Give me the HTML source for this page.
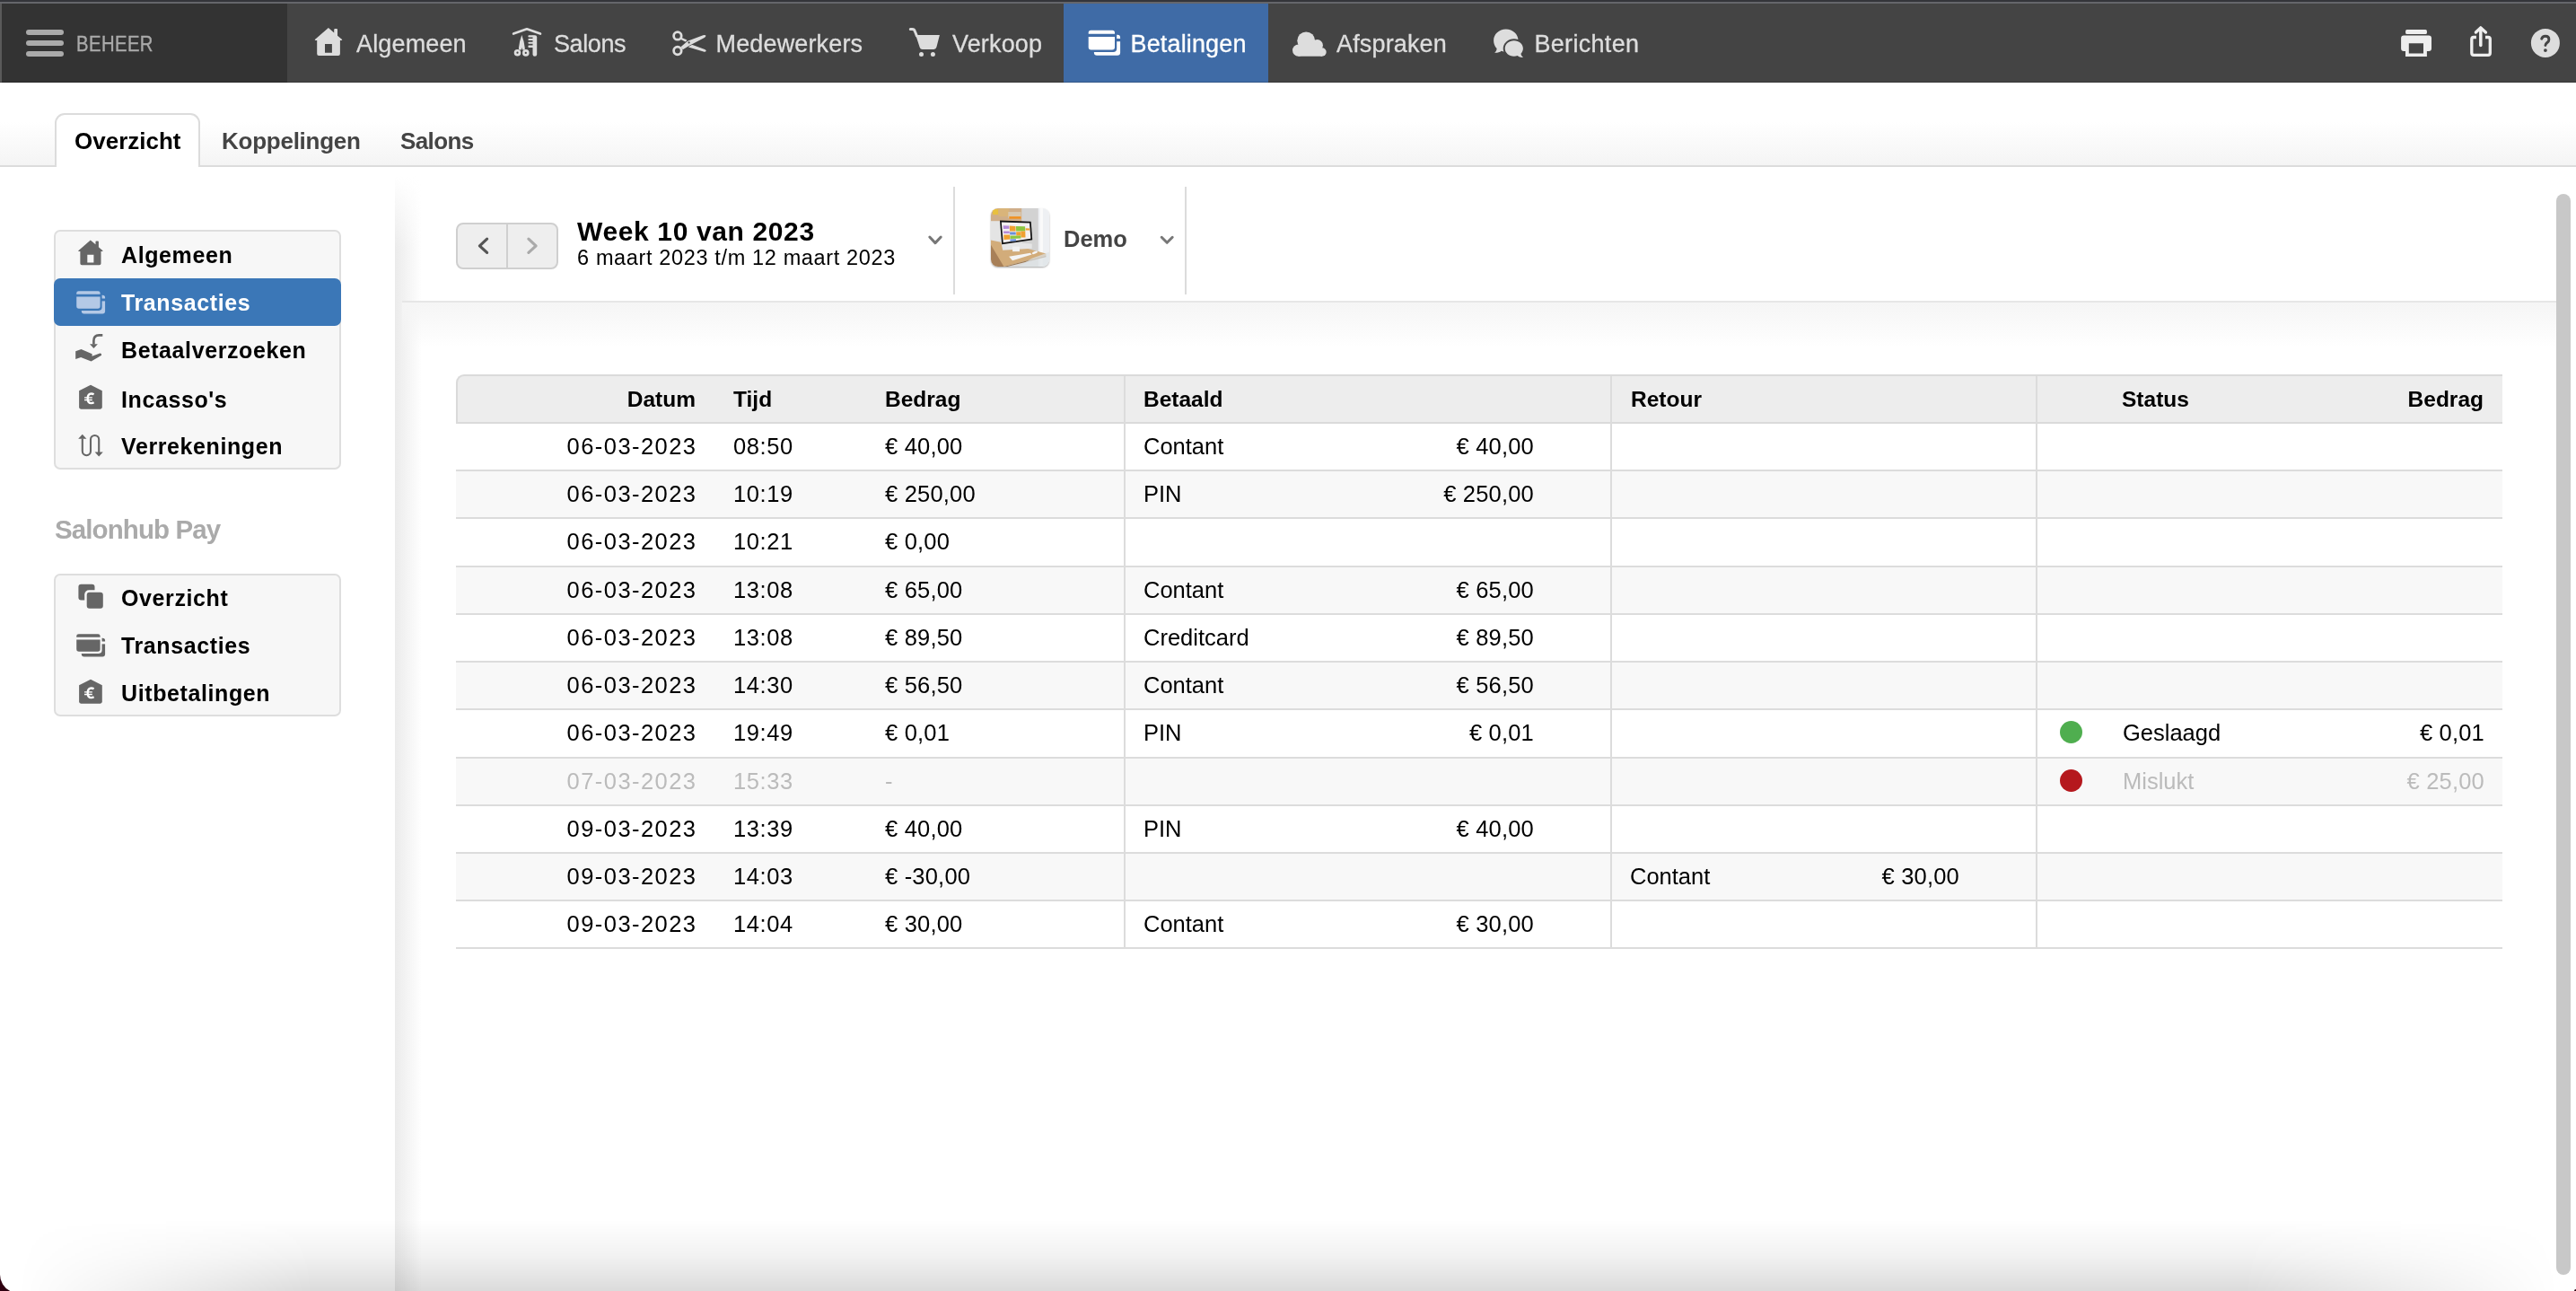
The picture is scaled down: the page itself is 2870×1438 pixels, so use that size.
<!DOCTYPE html>
<html><head><meta charset="utf-8">
<style>
*{margin:0;padding:0;box-sizing:border-box}
html,body{width:2870px;height:1438px;overflow:hidden;background:#fff;font-family:"Liberation Sans",sans-serif}
body{position:relative}
.a{position:absolute}
.t{position:absolute;white-space:nowrap;line-height:1}
/* top nav */
#tl1{left:0;top:0;width:2870px;height:2px;background:#34353a}
#tl2{left:0;top:2px;width:2870px;height:2px;background:#65666b}
#nav{left:0;top:4px;width:2870px;height:88px;background:#444}
#navl{left:0;top:4px;width:320px;height:88px;background:#333}
#navedge{left:0;top:4px;width:2px;height:88px;background:#5a5a5a}
#navbot{left:0;top:91px;width:2870px;height:1px;background:rgba(0,0,0,0.18)}
.burger{left:29px;width:42px;height:6px;border-radius:3px;background:#aaa}
.nt{color:#ddd;font-size:27px;top:35.7px;letter-spacing:0.15px;-webkit-text-stroke:0.3px currentColor}
#active{left:1185px;top:4px;width:228px;height:88px;background:#3f6ba6}
/* subtabs */
#sub{left:0;top:92px;width:2870px;height:93px;background:linear-gradient(#fff 0%,#fff 47%,#f4f4f4 100%)}
#subline{left:0;top:184px;width:2870px;height:2px;background:#dcdcdc}
#tab{left:61px;top:126px;width:162px;height:60px;background:#fff;border:2px solid #dcdcdc;border-bottom:none;border-radius:11px 11px 0 0}
.st{font-size:26px;font-weight:bold;top:144px}
/* sidebar */
.sbox{left:60px;width:320px;background:#f7f7f7;border:2px solid #dedede;border-radius:7px}
.si{font-size:25px;font-weight:bold;color:#000;left:135px;letter-spacing:0.6px}
#sact{left:60px;top:310px;width:320px;height:53px;background:#3b77b7;border-radius:7px}
/* main panel */
#panel{left:440px;top:186px;width:2429px;height:1252px;background:#fff}
#pshadow{left:440px;top:186px;width:30px;height:1252px;background:linear-gradient(90deg,#ebebeb,rgba(255,255,255,0));-webkit-mask-image:linear-gradient(rgba(0,0,0,0) 10px,#000 90px)}
#hdrline{left:448px;top:335px;width:2400px;height:2px;background:#e6e6e6}
#hdrgrad{left:448px;top:337px;width:2400px;height:50px;background:linear-gradient(#f5f5f5,rgba(255,255,255,0))}
#scroll{left:2848px;top:216px;width:16px;height:1204px;border-radius:8px;background:#c8c8c8}
/* table */
.row{position:absolute;left:508px;width:2280px;height:53.2px;border-bottom:2px solid #dcdcdc}
.td{position:absolute;white-space:nowrap;line-height:1;font-size:25.5px;top:12.6px;color:#000}
.dt{letter-spacing:1.45px}.tm{letter-spacing:0.6px}.am{letter-spacing:0.2px}
.r{text-align:right}

.dot{top:11.8px;width:25px;height:25px;border-radius:50%}
.th{position:absolute;white-space:nowrap;line-height:1;font-size:24.5px;font-weight:bold;top:432.7px;color:#000}
.vsep{position:absolute;top:419px;width:2px;height:638px;background:#dcdcdc}
#thead{left:508px;top:417px;width:2280px;height:55px;background:#ededed;border-top:2px solid #dadada;border-left:2px solid #dadada;border-bottom:2px solid #dadada;border-radius:9px 0 0 0}
#navbtn{left:508px;top:248px;width:114px;height:52px;background:#eee;border:2px solid #cfcfcf;border-radius:8px}
#navdiv{left:564px;top:250px;width:2px;height:48px;background:#cfcfcf}
.hdiv{top:208px;width:2px;height:120px;background:#dcdcdc}
#thumb{left:1104px;top:232px;width:65px;height:65px;border-radius:8px;overflow:hidden;box-shadow:0 1px 2px rgba(0,0,0,.35)}
body{will-change:transform}</style></head>
<body>
<div class="a" id="tl1"></div><div class="a" id="tl2"></div>
<div class="a" id="nav"></div><div class="a" id="navl"></div><div class="a" id="navedge"></div>
<div class="a" id="active"></div>
<div class="a" id="navbot"></div>
<div class="a burger" style="top:33px"></div>
<div class="a burger" style="top:45px"></div>
<div class="a burger" style="top:57px"></div>
<div class="t" style="left:85px;top:37.5px;font-size:23.5px;color:#aaa;letter-spacing:0.5px;-webkit-text-stroke:0.35px #aaa;transform:scaleX(0.862);transform-origin:0 0">BEHEER</div>

<div class="t nt" style="left:397px">Algemeen</div>
<div class="t nt" style="left:617px;letter-spacing:-0.4px">Salons</div>
<div class="t nt" style="left:797.5px">Medewerkers</div>
<div class="t nt" style="left:1061px">Verkoop</div>
<div class="t nt" style="left:1259.5px;color:#fff">Betalingen</div>
<div class="t nt" style="left:1489px">Afspraken</div>
<div class="t nt" style="left:1709.5px;letter-spacing:0.3px">Berichten</div>


<!-- nav icons -->
<svg class="a" style="left:345px;top:26px" width="40" height="40" viewBox="0 0 40 40"><path fill="#ddd" fill-rule="evenodd" d="M5.9 18.1 L20.9 5 L27.2 10.4 L27.2 7 Q27.2 6 28.2 6 L30 6 Q31 6 31 7 L31 13.7 L36.1 18.1 Q36.6 18.9 35.6 18.9 L33.9 18.9 L33.9 33.9 Q33.9 35.9 31.9 35.9 L10.2 35.9 Q8.2 35.9 8.2 33.9 L8.2 18.9 L6.4 18.9 Q5.4 18.9 5.9 18.1 Z M17 23.1 L24.9 23.1 L24.9 32.8 L17 32.8 Z"/></svg>

<svg class="a" style="left:566px;top:26px" width="42" height="42" viewBox="0 0 42 42"><g fill="#ddd" stroke="none">
<path d="M6.1 11.6 L21 6.3 L36 11.6" fill="none" stroke="#ddd" stroke-width="2.7" stroke-linecap="round" stroke-linejoin="round"/>
<path d="M15.3 13 Q17.9 19.5 18.8 27.6 L18.7 29.6 L16 29.6 L15.4 26.8 L14.8 29.6 L12.1 29.6 L11.9 27.6 Q12.8 19.5 15.3 13 Z"/>
<circle cx="10.5" cy="32.7" r="2.45" fill="none" stroke="#ddd" stroke-width="2.7"/>
<circle cx="19.8" cy="32.9" r="2.45" fill="none" stroke="#ddd" stroke-width="2.7"/>
<path d="M27.5 13.3 L30 13.3 Q32.2 13.3 32.2 15.5 L32.2 34.5 Q32.2 36.8 29.85 36.8 Q27.5 36.8 27.5 34.5 Z"/>
<rect x="22.4" y="13.3" width="6" height="2.2" rx="1"/>
<rect x="22.4" y="17" width="6" height="2.1" rx="1"/>
<rect x="22.4" y="20.7" width="6" height="2.1" rx="1"/>
<path d="M23.4 24.4 L28 24.4 L28 27 L23.4 27 Q22.4 27 22.4 25.7 Q22.4 24.4 23.4 24.4 Z"/>
</g></svg>

<svg class="a" style="left:745px;top:28px" width="46" height="40" viewBox="0 0 46 40">
<circle cx="9.9" cy="11.9" r="4.28" fill="none" stroke="#ddd" stroke-width="2.75"/>
<path fill="#ddd" d="M13.2 13.2 L20.3 16.6 L19.2 18.8 L12.6 15.6 Z"/>
<path fill="#ddd" d="M22.5 20.6 L40.2 26.9 Q42.3 27.9 41.6 29.1 Q40.8 30.2 38.8 29.6 L22 24.4 Z"/>
<path fill="#ddd" stroke="#444" stroke-width="1.3" paint-order="stroke" d="M13.5 24.3 L21 17.8 L38.3 11.2 Q40.6 10.4 41.3 11.6 Q41.8 12.8 39.8 13.9 L23.6 22.4 L15.8 27.3 Z"/>
<circle cx="9.9" cy="28.5" r="4.28" fill="none" stroke="#ddd" stroke-width="2.75"/>
<circle cx="22.6" cy="19.4" r="1.1" fill="#444"/>
</svg>

<svg class="a" style="left:1008px;top:26px" width="44" height="42" viewBox="0 0 44 42">
<path d="M6.3 6.5 L8.4 6.5 Q10.6 6.5 11.3 8.8 L13.4 14" fill="none" stroke="#ddd" stroke-width="3" stroke-linecap="round" stroke-linejoin="round"/>
<path d="M12.2 13 L38.9 13 L35.4 26.6 Q34.8 29 32.4 29 L19.6 29 Q17.4 29 16.7 26.8 Z" fill="#ddd"/>
<circle cx="18.5" cy="34.5" r="2.5" fill="#ddd"/><circle cx="31.4" cy="34.5" r="2.5" fill="#ddd"/>
</svg>

<svg class="a" style="left:1208px;top:28px" width="44" height="38" viewBox="0 0 44 38">
<rect x="10.9" y="10.7" width="29.2" height="23.1" rx="3.2" fill="#fff"/>
<rect x="2.7" y="3.7" width="33.5" height="26.2" rx="4" fill="#3f6ba6"/>
<rect x="34" y="15" width="8" height="3.2" fill="#3f6ba6"/>
<path d="M4.7 9.7 L4.7 8.4 Q4.7 5.7 7.4 5.7 L31.3 5.7 Q34 5.7 34 8.4 L34 9.7 Z" fill="#fff"/>
<path d="M4.7 12.9 L34 12.9 L34 24.4 Q34 27.4 31 27.4 L7.7 27.4 Q4.7 27.4 4.7 24.4 Z" fill="#fff"/>
</svg>

<svg class="a" style="left:1436px;top:28px" width="46" height="40" viewBox="0 0 46 40"><g fill="#ddd">
<circle cx="19.2" cy="17.3" r="9.9"/><circle cx="10.6" cy="28.1" r="6.6"/><circle cx="31.6" cy="22.4" r="6.3"/><circle cx="37" cy="30" r="4.7"/>
<rect x="10.6" y="22" width="26.4" height="12.7"/></g></svg>

<svg class="a" style="left:1658px;top:28px" width="44" height="40" viewBox="0 0 44 40">
<path fill="#ddd" d="M19.8 4.6 C27.5 4.6 33.5 10.3 33.5 17.2 C33.5 24 27.5 29.6 19.8 29.6 C17.9 29.6 16.3 29.3 14.7 28.7 C12.8 30.3 10 30.9 7.1 30.7 C8.8 29.4 9.6 27.7 9.6 26 C7.4 23.7 6.1 20.6 6.1 17.2 C6.1 10.3 12.1 4.6 19.8 4.6 Z"/>
<ellipse cx="28.8" cy="26" rx="12.1" ry="10.7" fill="#444"/>
<path fill="#ddd" d="M28.8 17.3 C34.4 17.3 38.9 21.2 38.9 26 C38.9 28.2 38 30.2 36.5 31.8 C36.6 33.5 37.6 35 39 36 C36.5 36.3 34.3 35.5 32.6 34.1 C31.4 34.5 30.1 34.7 28.8 34.7 C23.2 34.7 18.7 30.8 18.7 26 C18.7 21.2 23.2 17.3 28.8 17.3 Z"/>
</svg>

<svg class="a" style="left:2670px;top:24px" width="44" height="44" viewBox="0 0 44 44">
<rect x="10.1" y="9" width="23.8" height="5" rx="1.6" fill="#eee"/>
<path fill="#eee" fill-rule="evenodd" d="M8.2 15.5 L35.9 15.5 Q39 15.5 39 18.6 L39 29.9 Q39 32.9 36 32.9 L33.9 32.9 L33.9 38.9 L10 38.9 L10 32.9 L8.1 32.9 Q5.1 32.9 5.1 29.9 L5.1 18.6 Q5.1 15.5 8.2 15.5 Z M13.8 24.2 L30 24.2 L30 35.6 L13.8 35.6 Z"/>
</svg>

<svg class="a" style="left:2744px;top:24px" width="40" height="44" viewBox="0 0 40 44">
<path d="M14.9 17.5 L12 17.5 Q9.8 17.5 9.8 19.7 L9.8 35 Q9.8 37.3 12 37.3 L28.1 37.3 Q30.3 37.3 30.3 35 L30.3 19.7 Q30.3 17.5 28.1 17.5 L25 17.5" fill="none" stroke="#eee" stroke-width="3.3"/>
<path d="M19.8 7.5 L19.8 26.6" stroke="#eee" stroke-width="3.5" stroke-linecap="round"/>
<path d="M14.4 12 L19.8 6.9 L25.4 12" fill="none" stroke="#eee" stroke-width="3.4" stroke-linecap="round" stroke-linejoin="round"/>
</svg>

<svg class="a" style="left:2818px;top:30px" width="36" height="36" viewBox="0 0 36 36">
<circle cx="17.9" cy="17.9" r="16" fill="#ddd"/>
<path d="M13.7 13.2 Q14.6 10.3 17.9 10.3 Q21.9 10.3 21.9 13.9 Q21.9 15.9 19.8 17.5 Q17.9 19 17.9 20.6" fill="none" stroke="#444" stroke-width="2.9" stroke-linecap="round" stroke-linejoin="round"/>
<circle cx="17.9" cy="26.1" r="1.9" fill="#444"/>
</svg>

<div class="a" id="sub"></div>
<div class="a" id="subline"></div>
<div class="a" id="tab"></div>
<div class="t st" style="left:83px;color:#000">Overzicht</div>
<div class="t st" style="left:247px;color:#444;letter-spacing:-0.25px">Koppelingen</div>
<div class="t st" style="left:446px;color:#444;letter-spacing:-0.6px">Salons</div>

<!-- sidebar -->
<div class="a sbox" style="top:256px;height:267px"></div>
<div class="a" id="sact"></div>
<div class="t si" style="top:272px">Algemeen</div>
<div class="t si" style="top:325.4px;color:#fff">Transacties</div>
<div class="t si" style="top:378.3px">Betaalverzoeken</div>
<div class="t si" style="top:432.5px">Incasso's</div>
<div class="t si" style="top:485.4px">Verrekeningen</div>

<div class="t" style="left:61px;top:575px;font-size:29.5px;font-weight:bold;color:#aaa;letter-spacing:-0.9px">Salonhub Pay</div>
<div class="a sbox" style="top:639px;height:159px"></div>
<div class="t si" style="top:653.5px">Overzicht</div>
<div class="t si" style="top:707px">Transacties</div>
<div class="t si" style="top:760.3px">Uitbetalingen</div>

<!-- main -->
<div class="a" id="panel"></div>
<div class="a" id="pshadow"></div>
<div class="a" id="hdrgrad"></div>
<div class="a" id="hdrline"></div>
<div class="a" id="scroll"></div>


<!-- toolbar -->
<div class="a" id="navbtn"></div>
<div class="a" id="navdiv"></div>
<div class="t" style="left:643px;top:243px;font-size:30px;font-weight:bold;color:#000;letter-spacing:0.63px">Week 10 van 2023</div>
<div class="t" style="left:643px;top:276.1px;font-size:23.5px;color:#000;letter-spacing:0.64px">6 maart 2023 t/m 12 maart 2023</div>
<div class="a hdiv" style="left:1062px"></div>
<div class="a" id="thumb"><svg width="65" height="65" viewBox="0 0 64 64" preserveAspectRatio="none" style="filter:blur(0.35px)">
<rect width="64" height="64" fill="#dcdcdc"/>
<rect x="0" y="0" width="34" height="16" fill="#cfae8a"/>
<rect x="8" y="0" width="12" height="9" fill="#d9b47a"/>
<rect x="19" y="4" width="14" height="7" fill="#d8c8b0"/>
<rect x="20" y="9" width="13" height="2.5" fill="#f09020"/>
<rect x="2" y="1" width="6" height="6" fill="#e8c040"/>
<rect x="0" y="14" width="12" height="22" fill="#e4e4e4"/>
<rect x="34" y="0" width="18" height="50" fill="#d2d2d2"/>
<rect x="52" y="0" width="12" height="64" fill="#eef0f3"/>
<rect x="54" y="0" width="3" height="64" fill="#fafafa"/>
<polygon points="0,35 25,40 60.5,49.6 60.5,52 14.2,64 0,64" fill="#d2ac7a"/>
<polygon points="0,40 14.2,64 0,64" fill="#a88058"/>
<polygon points="60.5,52 14.2,64 18,64 60.5,53.5" fill="#9c7a55"/>
<polygon points="11,37 45,39 45,44 13,46" fill="#e6e6e6"/>
<rect x="23.7" y="42" width="7.8" height="5.4" fill="#f2f2f2"/>
<polygon points="9.8,13.4 44,14.5 45.5,34.6 12,39.6" fill="#111"/>
<polygon points="11.6,15.3 42.4,16.3 43.7,33.3 13.5,37.7" fill="#f4f0f0"/>
<polygon points="13.5,19 20,19.3 20.2,22.5 13.8,22.6" fill="#b58ad8"/>
<polygon points="20.5,19.3 27,19.6 27.2,25 20.7,25.2" fill="#f0a030"/>
<polygon points="27.5,19.6 37.5,20 37.7,25 27.7,25" fill="#8dc63f"/>
<polygon points="13.8,25 20.3,25 20.5,27.5 14,27.6" fill="#b58ad8"/>
<polygon points="20.7,26 27.2,26 27.4,29 20.9,29.1" fill="#6a8fd8"/>
<polygon points="27.7,25.8 32.5,25.8 32.7,30 27.9,30" fill="#f0a030"/>
<polygon points="32.7,25 37.7,25 37.9,32 32.9,32" fill="#f0a030"/>
<polygon points="14,29 20.7,29 21,34 14.3,34.5" fill="#f0a030"/>
<polygon points="21,30 32.7,30 32.9,33 21.2,33.5" fill="#8dc63f"/>
<polygon points="21,34 27.5,33.8 27.6,36 21.2,36.3" fill="#6a8fd8"/>
<polygon points="38,22 42.6,22.2 42.7,24 38.1,24" fill="#f0a030"/>
<polygon points="19.8,53 43.2,49.1 44.9,50.8 23.7,57.4" fill="#f4f4f4"/>
<ellipse cx="48.2" cy="48.6" rx="3.2" ry="1.3" fill="#f4f4f4" transform="rotate(-20 48.2 48.6)"/>
<polygon points="45,55 64,48 64,64 30,64" fill="#dde2e6" opacity="0.7"/>
</svg></div>
<svg class="a" style="left:520px;top:258px" width="110" height="32" viewBox="0 0 110 32">
<path d="M22.6 8.2 L14.4 15.8 L22.6 23.4" fill="none" stroke="#555" stroke-width="3.2" stroke-linecap="round" stroke-linejoin="round"/>
<path d="M68.9 8.2 L77.1 15.8 L68.9 23.4" fill="none" stroke="#aaa" stroke-width="3.2" stroke-linecap="round" stroke-linejoin="round"/>
</svg>
<svg class="a" style="left:1030px;top:258px" width="24" height="20" viewBox="0 0 24 20"><path d="M5.8 6 L12 12.6 L18.2 6" fill="none" stroke="#777" stroke-width="3" stroke-linecap="round" stroke-linejoin="round"/></svg>
<svg class="a" style="left:1288px;top:258px" width="24" height="20" viewBox="0 0 24 20"><path d="M6.2 6.3 L12.2 12.3 L18.2 6.3" fill="none" stroke="#777" stroke-width="3" stroke-linecap="round" stroke-linejoin="round"/></svg>

<!-- sidebar icons -->
<svg class="a" style="left:81.8px;top:263.1px" width="36" height="36" viewBox="0 0 36 36"><path transform="scale(0.9)" fill="#666" fill-rule="evenodd" d="M5.9 18.1 L20.9 5 L27.2 10.4 L27.2 7 Q27.2 6 28.2 6 L30 6 Q31 6 31 7 L31 13.7 L36.1 18.1 Q36.6 18.9 35.6 18.9 L33.9 18.9 L33.9 33.9 Q33.9 35.9 31.9 35.9 L10.2 35.9 Q8.2 35.9 8.2 33.9 L8.2 18.9 L6.4 18.9 Q5.4 18.9 5.9 18.1 Z M17 23.1 L24.9 23.1 L24.9 32.8 L17 32.8 Z"/></svg>
<svg class="a" style="left:80.5px;top:318.7px" width="40" height="35" viewBox="0 0 40 35"><g transform="scale(0.9)">
<rect x="10.9" y="10.7" width="29.2" height="23.1" rx="3.2" fill="#b4c9e6"/>
<rect x="2.7" y="3.7" width="33.5" height="26.2" rx="4" fill="#3b77b7"/>
<rect x="34" y="15" width="8" height="3.2" fill="#3b77b7"/>
<path d="M4.7 9.7 L4.7 8.4 Q4.7 5.7 7.4 5.7 L31.3 5.7 Q34 5.7 34 8.4 L34 9.7 Z" fill="#b4c9e6"/>
<path d="M4.7 12.9 L34 12.9 L34 24.4 Q34 27.4 31 27.4 L7.7 27.4 Q4.7 27.4 4.7 24.4 Z" fill="#b4c9e6"/></g></svg>
<svg class="a" style="left:80px;top:365px" width="40" height="40" viewBox="0 0 40 40">
<path d="M34.3 8.4 L30.3 8.4 Q24.4 8.4 24.4 14.6 L24.4 18.5" fill="none" stroke="#666" stroke-width="2.6" stroke-linejoin="round"/>
<path fill="#666" d="M20 18.3 L28.9 18.3 L24.4 23 Z"/>
<path fill="#666" d="M4.2 26.3 L10.5 24.1 L22.6 29.2 L22.6 31.8 L31.3 28.6 Q33.4 28.4 33.1 30.7 L21.6 37.6 L10.1 32.9 L4.2 35 Z"/>
</svg>
<svg class="a" style="left:80px;top:420px" width="40" height="40" viewBox="0 0 40 40">
<path fill="#666" d="M21 8.8 L33.8 15.3 L33.8 33.6 Q33.8 35.7 31.7 35.7 L10.2 35.7 Q8.1 35.7 8.1 33.6 L8.1 15.3 Z"/>
<path d="M24.6 19.3 Q23.2 18.5 21.7 18.5 Q17.7 18.5 17.7 23.9 Q17.7 29.1 21.7 29.1 Q23.2 29.1 24.6 28.3" fill="none" stroke="#fff" stroke-width="2.3"/>
<path d="M14 22.9 L22.8 22.9 M14 25.5 L22.8 25.5" stroke="#fff" stroke-width="1.4"/>
</svg>
<svg class="a" style="left:80px;top:478px" width="40" height="36" viewBox="0 0 40 36">
<path d="M11.8 10.5 L11.8 24.6 A4.6 4.6 0 0 0 21 24.6 L21 11.6 A4.6 4.6 0 0 1 30.2 11.6 L30.2 26" fill="none" stroke="#666" stroke-width="2.1"/>
<path fill="#666" d="M11.8 5.8 L16.4 10.8 L7.2 10.8 Z M30.2 30.6 L25.6 25.5 L34.8 25.5 Z"/>
</svg>
<svg class="a" style="left:80px;top:645px" width="40" height="40" viewBox="0 0 40 40">
<rect x="7.4" y="5.7" width="18.1" height="17.8" rx="3" fill="#666"/>
<rect x="14.2" y="12.3" width="23.1" height="23" rx="5" fill="#f7f7f7"/>
<rect x="16.7" y="14.8" width="18.1" height="18" rx="3" fill="#666"/>
</svg>
<svg class="a" style="left:80.7px;top:700.6px" width="40" height="35" viewBox="0 0 40 35"><g transform="scale(0.9)">
<rect x="10.9" y="10.7" width="29.2" height="23.1" rx="3.2" fill="#666"/>
<rect x="2.7" y="3.7" width="33.5" height="26.2" rx="4" fill="#f7f7f7"/>
<rect x="34" y="15" width="8" height="3.2" fill="#f7f7f7"/>
<path d="M4.7 9.7 L4.7 8.4 Q4.7 5.7 7.4 5.7 L31.3 5.7 Q34 5.7 34 8.4 L34 9.7 Z" fill="#666"/>
<path d="M4.7 12.9 L34 12.9 L34 24.4 Q34 27.4 31 27.4 L7.7 27.4 Q4.7 27.4 4.7 24.4 Z" fill="#666"/></g></svg>
<svg class="a" style="left:80px;top:748px" width="40" height="40" viewBox="0 0 40 40">
<path fill="#666" d="M21 8.8 L33.8 15.3 L33.8 33.6 Q33.8 35.7 31.7 35.7 L10.2 35.7 Q8.1 35.7 8.1 33.6 L8.1 15.3 Z"/>
<path d="M24.6 19.3 Q23.2 18.5 21.7 18.5 Q17.7 18.5 17.7 23.9 Q17.7 29.1 21.7 29.1 Q23.2 29.1 24.6 28.3" fill="none" stroke="#fff" stroke-width="2.3"/>
<path d="M14 22.9 L22.8 22.9 M14 25.5 L22.8 25.5" stroke="#fff" stroke-width="1.4"/>
</svg>

<div class="t" style="left:1185px;top:254px;font-size:25.5px;font-weight:bold;color:#444">Demo</div>
<div class="a hdiv" style="left:1320px"></div>

<!-- table -->
<div class="a" id="thead"></div>
<div class="th" style="right:2095px">Datum</div>
<div class="th" style="left:817px">Tijd</div>
<div class="th" style="left:986px">Bedrag</div>
<div class="th" style="left:1274px">Betaald</div>
<div class="th" style="left:1817px">Retour</div>
<div class="th" style="left:2364px">Status</div>
<div class="th" style="right:103px">Bedrag</div>
<div class="row" style="top:472px;height:53px;background:#fff">
<div class="td r dt" style="right:2011.5px">06-03-2023</div>
<div class="td tm" style="left:309px">08:50</div>
<div class="td am" style="left:478px">€ 40,00</div>
<div class="td" style="left:766px">Contant</div>
<div class="td r am" style="right:1079px">€ 40,00</div>
</div>
<div class="row" style="top:525px;height:53px;background:#f8f8f8">
<div class="td r dt" style="right:2011.5px">06-03-2023</div>
<div class="td tm" style="left:309px">10:19</div>
<div class="td am" style="left:478px">€ 250,00</div>
<div class="td" style="left:766px">PIN</div>
<div class="td r am" style="right:1079px">€ 250,00</div>
</div>
<div class="row" style="top:578px;height:54px;background:#fff">
<div class="td r dt" style="right:2011.5px">06-03-2023</div>
<div class="td tm" style="left:309px">10:21</div>
<div class="td am" style="left:478px">€ 0,00</div>
</div>
<div class="row" style="top:632px;height:53px;background:#f8f8f8">
<div class="td r dt" style="right:2011.5px">06-03-2023</div>
<div class="td tm" style="left:309px">13:08</div>
<div class="td am" style="left:478px">€ 65,00</div>
<div class="td" style="left:766px">Contant</div>
<div class="td r am" style="right:1079px">€ 65,00</div>
</div>
<div class="row" style="top:685px;height:53px;background:#fff">
<div class="td r dt" style="right:2011.5px">06-03-2023</div>
<div class="td tm" style="left:309px">13:08</div>
<div class="td am" style="left:478px">€ 89,50</div>
<div class="td" style="left:766px">Creditcard</div>
<div class="td r am" style="right:1079px">€ 89,50</div>
</div>
<div class="row" style="top:738px;height:53px;background:#f8f8f8">
<div class="td r dt" style="right:2011.5px">06-03-2023</div>
<div class="td tm" style="left:309px">14:30</div>
<div class="td am" style="left:478px">€ 56,50</div>
<div class="td" style="left:766px">Contant</div>
<div class="td r am" style="right:1079px">€ 56,50</div>
</div>
<div class="row" style="top:791px;height:54px;background:#fff">
<div class="td r dt" style="right:2011.5px">06-03-2023</div>
<div class="td tm" style="left:309px">19:49</div>
<div class="td am" style="left:478px">€ 0,01</div>
<div class="td" style="left:766px">PIN</div>
<div class="td r am" style="right:1079px">€ 0,01</div>
<div class="a dot" style="left:1786.6px;background:#4fae4f"></div>
<div class="td" style="left:1857px">Geslaagd</div>
<div class="td r am" style="right:20px">€ 0,01</div>
</div>
<div class="row" style="top:845px;height:53px;background:#f8f8f8">
<div class="td r dt" style="right:2011.5px;color:#bbb">07-03-2023</div>
<div class="td tm" style="left:309px;color:#bbb">15:33</div>
<div class="td am" style="left:478px;color:#bbb">-</div>
<div class="a dot" style="left:1786.6px;background:#b5181d"></div>
<div class="td" style="left:1857px;color:#bbb">Mislukt</div>
<div class="td r am" style="right:20px;color:#bbb">€ 25,00</div>
</div>
<div class="row" style="top:898px;height:53px;background:#fff">
<div class="td r dt" style="right:2011.5px">09-03-2023</div>
<div class="td tm" style="left:309px">13:39</div>
<div class="td am" style="left:478px">€ 40,00</div>
<div class="td" style="left:766px">PIN</div>
<div class="td r am" style="right:1079px">€ 40,00</div>
</div>
<div class="row" style="top:951px;height:53px;background:#f8f8f8">
<div class="td r dt" style="right:2011.5px">09-03-2023</div>
<div class="td tm" style="left:309px">14:03</div>
<div class="td am" style="left:478px">€ -30,00</div>
<div class="td" style="left:1308px">Contant</div>
<div class="td r am" style="right:605px">€ 30,00</div>
</div>
<div class="row" style="top:1004px;height:53px;background:#fff">
<div class="td r dt" style="right:2011.5px">09-03-2023</div>
<div class="td tm" style="left:309px">14:04</div>
<div class="td am" style="left:478px">€ 30,00</div>
<div class="td" style="left:766px">Contant</div>
<div class="td r am" style="right:1079px">€ 30,00</div>
</div>
<div class="vsep" style="left:1252px"></div>
<div class="vsep" style="left:1794px"></div>
<div class="vsep" style="left:2268px"></div>

<div class="a" style="left:0;top:1358px;width:2870px;height:80px;background:linear-gradient(rgba(0,0,0,0),rgba(0,0,0,0.05) 50%,rgba(0,0,0,0.14));-webkit-mask-image:linear-gradient(90deg,rgba(0,0,0,0) 20px,#000 350px,#000 2500px,rgba(0,0,0,0) 2850px)"></div>
<svg class="a" style="left:0;top:1410px" width="30" height="28" viewBox="0 0 30 28"><path d="M0 9.7 L0 28 L11.2 28 A20.6 20.6 0 0 1 0 9.7 Z" fill="#2e0010"/></svg>
<div class="a" style="left:2868px;top:1436px;width:2px;height:2px;background:#2e0010;border-radius:2px 0 0 0"></div>
</body></html>
